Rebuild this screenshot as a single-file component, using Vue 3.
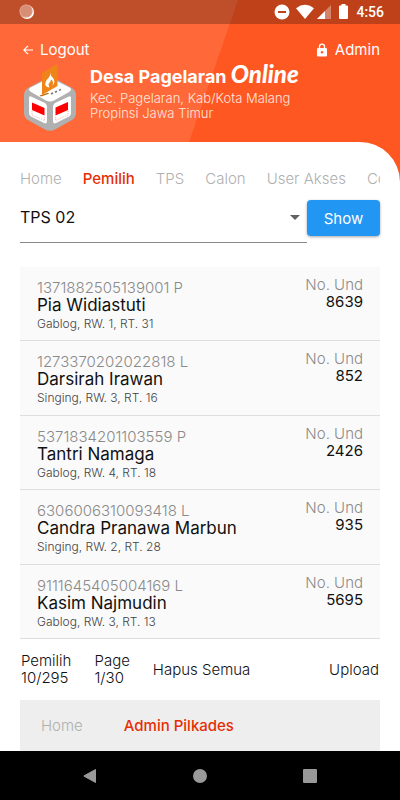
<script setup>
import { ref } from 'vue'

const tabs = ['Home', 'Pemilih', 'TPS', 'Calon', 'User Akses', 'Config']
const activeTab = ref('Pemilih')
const tps = ref('TPS 02')
const voters = [
  { id: '1371882505139001', sex: 'P', name: 'Pia Widiastuti', address: 'Gablog, RW. 1, RT. 31', no: '8639' },
  { id: '1273370202022818', sex: 'L', name: 'Darsirah Irawan', address: 'Singing, RW. 3, RT. 16', no: '852' },
  { id: '5371834201103559', sex: 'P', name: 'Tantri Namaga', address: 'Gablog, RW. 4, RT. 18', no: '2426' },
  { id: '6306006310093418', sex: 'L', name: 'Candra Pranawa Marbun', address: 'Singing, RW. 2, RT. 28', no: '935' },
  { id: '9111645405004169', sex: 'L', name: 'Kasim Najmudin', address: 'Gablog, RW. 3, RT. 13', no: '5695' }
]
</script>

<template>
  <div class="app">
    <div class="hero">
      <div class="status">
        <svg class="spinner" width="16" height="16" viewBox="0 0 16 16">
          <circle cx="8" cy="8" r="7" fill="#fff" />
          <circle cx="7" cy="7" r="6.6" fill="#d78e75" />
          <circle cx="7" cy="7" r="6" fill="none" stroke="#e9b5a3" stroke-dasharray="1 1" />
        </svg>
        <div class="status-right">
          <svg width="74" height="18" viewBox="0 0 74 18" fill="#fff">
            <circle cx="8" cy="9" r="7.5" />
            <rect x="4" y="8" width="8" height="2" fill="#bf421a" />
            <path d="M22 5.200Q31 -1.500 40 5.200L31 16Z" />
            <path d="M57 2V16H43Z" opacity=".35" />
            <path d="M51 8V16H43Z" />
            <path d="M67.500 1h4v1.500H73q1 0 1 1V15q0 1-1 1h-7q-1 0-1-1V3.500q0-1 1-1h1.500z" />
          </svg>
          <span>4:56</span>
        </div>
      </div>

      <header class="header">
        <div class="links">
          <a href="#logout">
            <svg width="10" height="10" viewBox="0 0 10 10" fill="none" stroke="#fff" stroke-width="1.200">
              <path d="M10 5H1M5 .8.900 5 5 9.200" />
            </svg>
            Logout
          </a>
          <a href="#admin">
            <svg width="12" height="14" viewBox="0 0 12 14">
              <path d="M3.500 6V3.700a2.500 2.500 0 0 1 5 0V6" fill="none" stroke="#fff" stroke-width="1.300" />
              <rect x="1" y="5" width="10" height="8.500" rx="1.200" fill="#fff" />
              <circle cx="6" cy="9.200" r="1.200" fill="#ff5722" />
            </svg>
            Admin
          </a>
        </div>
        <div class="brand">
          <svg width="52" height="68" viewBox="0 0 52 68">
            <path d="M21.500 14.500 4 24Q0 26.500 0 31V49Q0 53.500 4 56L21 65.500Q26 68 31 65.500L48 56Q52 53.500 52 49V31Q52 26.500 48 24L31 14.500Q26 12 21.500 14.500Z" fill="#b0b0b0" />
            <path d="M22 15.800 7 23.300Q3 25.500 7 28L22 36.500Q26 38.500 30 36.500L45 28Q49 25.500 45 23.300L30 15.800Q26 14 22 15.800Z" fill="#fff" />
            <path d="M7 32.500 20 38.500Q23 40 23 43V57Q23 60.500 20 59L7 52.500Q5 51.500 5 49V34Q5 31.500 7 32.500Z" fill="#fff" />
            <path d="M45 32.500 32 38.500Q29 40 29 43V57Q29 60.500 32 59L45 52.500Q47 51.500 47 49V34Q47 31.500 45 32.500Z" fill="#fff" />
            <path d="M8 38.500 20.500 44V51.500L8 46Z" fill="#f00" />
            <path d="M44 38 31.500 43.500V51.500L44 46Z" fill="#f00" />
            <path d="M8 47v4l12.500 5.500V52.500M44 47v4L31.500 56.500V52.500" fill="none" stroke="#f0a0a0" stroke-width=".8" stroke-dasharray="1 1" />
            <path d="M15.500 31.500 24 28.800 25 29.800 17 32.500Z" fill="#b96d10" />
            <path d="M18 9 33.500 0V22L18 31Z" fill="#ef8519" />
            <path d="M26.500 8.500Q26.500 12 29 14Q32 18 28.500 21.500Q30 17 27 15.500Q26.500 19 24.500 20Q25 23 25.500 23.500Q20.500 23 21.500 18.500Q22 16 24.500 14Q27 11.500 26.500 8.500Z" fill="#fff" />
            <path d="m27 30 2-1m2-.8 2-1m2-.8 2-1" stroke="#777" stroke-width="1.600" />
          </svg>
          <div>
            <h1>Desa Pagelaran <em>Online</em></h1>
            <p>Kec. Pagelaran, Kab/Kota Malang<br />Propinsi Jawa Timur</p>
          </div>
        </div>
      </header>
    </div>

    <div class="sheet">
      <main class="content">
        <nav class="tabs">
          <a
            v-for="tab in tabs"
            :key="tab"
            :href="'#' + tab"
            :class="{ active: tab === activeTab }"
            @click.prevent="activeTab = tab"
          >{{ tab }}</a>
        </nav>

        <form class="filter" @submit.prevent>
          <div class="field">
            <select v-model="tps" aria-label="TPS">
              <option>TPS 01</option>
              <option>TPS 02</option>
            </select>
            <svg class="caret" width="10" height="5" viewBox="0 0 10 5"><path d="M0 0h10L5 5z" fill="#616161" /></svg>
          </div>
          <button class="show" type="submit">Show</button>
        </form>

        <ul class="list">
          <li v-for="v in voters" :key="v.id">
            <div>
              <div class="nik">{{ v.id }} {{ v.sex }}</div>
              <div class="name">{{ v.name }}</div>
              <div class="address">{{ v.address }}</div>
            </div>
            <div class="number">
              <span>No. Und</span>
              <b>{{ v.no }}</b>
            </div>
          </li>
        </ul>

        <div class="summary">
          <div>Pemilih<br />10/295</div>
          <div>Page<br />1/30</div>
          <button type="button">Hapus Semua</button>
          <button type="button" class="upload">Upload</button>
        </div>

        <nav class="crumbs">
          <a href="#home">Home</a>
          <a href="#admin-pilkades" class="active">Admin Pilkades</a>
        </nav>
      </main>
    </div>

    <div class="system">
      <button type="button" aria-label="Back">
        <svg width="14" height="14" viewBox="0 0 14 14"><path d="M12.500.500V13.500L.8 7Z" fill="#999" stroke="#999" stroke-linejoin="round" /></svg>
      </button>
      <button type="button" aria-label="Home">
        <svg width="14" height="14" viewBox="0 0 14 14"><circle cx="7" cy="7" r="7" fill="#999" /></svg>
      </button>
      <button type="button" aria-label="Recent apps">
        <svg width="14" height="14" viewBox="0 0 14 14"><rect width="14" height="14" rx="1" fill="#999" /></svg>
      </button>
    </div>
  </div>
</template>

<style>
body {
  margin: 0;
  background: #fff;
}
</style>

<style scoped>
* {
  box-sizing: border-box;
}

.app {
  display: flex;
  flex-direction: column;
  min-height: 100vh;
  font-family: Inter, "Open Sans", sans-serif;
  font-size: 15px;
  font-weight: 300;
  line-height: 17px;
  color: #111;
}

a {
  color: inherit;
  text-decoration: none;
}

button {
  padding: 0;
  border: 0;
  background: none;
  font: inherit;
  color: inherit;
  cursor: pointer;
}

.hero {
  background: linear-gradient(109deg, #ff6838 53%, #ff5722 53%);
  color: #fff;
}

.status {
  display: flex;
  justify-content: space-between;
  align-items: center;
  height: 24px;
  padding: 0 16px 0 19px;
  background: rgba(0, 0, 0, 0.25);
}

.status-right {
  display: flex;
  align-items: center;
  gap: 8px;
  font-family: Roboto, sans-serif;
  font-size: 14px;
  font-weight: 500;
}

.header {
  padding: 17px 20px 8px;
}

.links {
  display: flex;
  justify-content: space-between;
}

.links a {
  display: flex;
  align-items: center;
  gap: 7px;
  padding-left: 3px;
  font-weight: 400;
}

.brand {
  display: flex;
  gap: 14px;
  padding: 6px 0 2px 4px;
}

h1 {
  margin: 0;
  font-size: 18px;
  font-weight: 700;
  line-height: 20px;
  white-space: nowrap;
}

h1 em {
  font-family: Lato, sans-serif;
  font-size: 24px;
  font-weight: 900;
}

.brand p {
  margin: 4px 0 0;
  font-size: 13px;
  line-height: 15px;
  color: #ffe6dd;
}

.sheet {
  flex: 1;
  display: flex;
  background: #ff5722;
}

.content {
  flex: 1;
  min-width: 0;
  padding: 28px 20px 0;
  border-top-right-radius: 40px;
  background: #fff;
}

.tabs {
  display: flex;
  gap: 21px;
  overflow: hidden;
  color: #b0b0b0;
  white-space: nowrap;
}

.active {
  font-weight: 500;
  color: #e62e05;
}

.filter {
  display: flex;
  align-items: flex-start;
  padding-top: 13px;
}

.field {
  flex: 1;
  display: flex;
  align-items: center;
  height: 43px;
  padding: 0 7px 8px 0;
  border-bottom: 1px solid #888;
}

select {
  flex: 1;
  min-width: 0;
  padding: 0;
  border: 0;
  appearance: none;
  background: none;
  font: inherit;
  font-size: 16px;
  font-weight: 400;
  color: #111;
}

.show {
  width: 73px;
  height: 36px;
  border-radius: 4px;
  background: #2196f3;
  box-shadow: 0 1px 3px rgba(0, 0, 0, 0.35);
  font-weight: 400;
  color: #fff;
}

.list {
  display: grid;
  grid-auto-rows: 1fr;
  min-height: 372px;
  margin: 24px 0 0;
  padding: 0;
  list-style: none;
  background: #fafafa;
}

.list li {
  display: flex;
  justify-content: space-between;
  padding: 12px 17px 0;
  border-bottom: 1px solid #dedede;
}

.nik {
  color: #8a8a8a;
}

.name {
  font-size: 17px;
  font-weight: 400;
  line-height: 19px;
}

.address {
  font-size: 12px;
  line-height: 18px;
  color: #444;
}

.number {
  display: flex;
  flex-direction: column;
  margin-top: -3px;
  text-align: right;
}

.number span {
  color: #8a8a8a;
}

.number b {
  font-weight: 400;
}

.summary {
  display: flex;
  align-items: center;
  gap: 23px;
  padding: 13px 1px 14px;
}

.upload {
  margin-left: auto;
}

.crumbs {
  display: flex;
  gap: 41px;
  padding: 17px 21px;
  background: #eee;
  color: #b0b0b0;
}

.system {
  display: flex;
  justify-content: center;
  gap: 96px;
  height: 49px;
  background: #000;
}

.system button {
  display: flex;
  align-items: center;
}
</style>
